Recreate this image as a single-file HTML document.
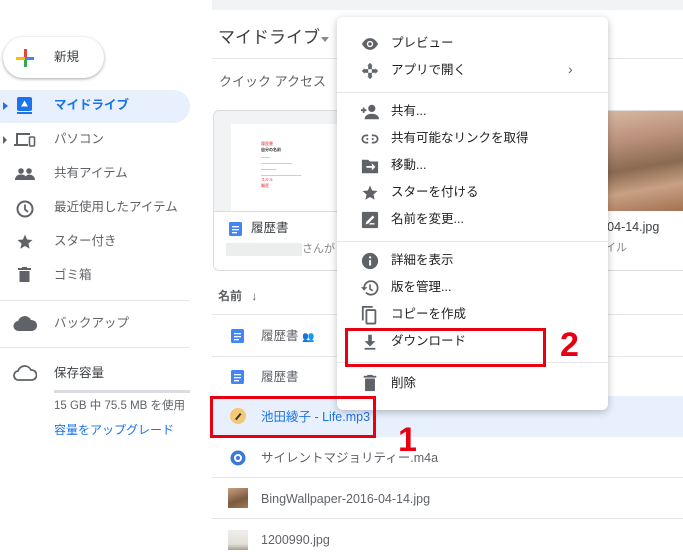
<!DOCTYPE html>
<html><head><meta charset="utf-8">
<style>
*{margin:0;padding:0;box-sizing:border-box}
body{width:683px;height:558px;overflow:hidden;background:#fff;font-family:"Liberation Sans","Noto Sans CJK JP",sans-serif;color:#5f6368;position:relative;font-size:12px;line-height:1.15}
.a{position:absolute;white-space:nowrap}
svg.a{display:block}
.t{font-size:12.5px;color:#3c4043}
.hl{background:#e8f0fe}
.div{position:absolute;height:1px;background:#e6e6e6}
.mi{position:absolute;left:361px;width:18px;height:18px}
.ml{position:absolute;left:391px;font-size:12.5px;color:#202124;line-height:1.15}
.red{position:absolute;border:3px solid #e60012}
.num{position:absolute;color:#e60012;font-weight:bold;font-size:34px;font-family:"Liberation Sans",sans-serif;line-height:1}
</style></head><body>
<div class="a" style="left:212px;top:0;width:471px;height:10px;background:#f1f3f4"></div>
<div class="a" style="left:3px;top:37px;width:101px;height:41px;border-radius:21px;box-shadow:0 1px 3px rgba(0,0,0,.35);background:#fff"></div>
<svg class="a" style="left:15px;top:48px" width="20" height="20" viewBox="0 0 20 20"><rect x="9" y="1" width="3" height="9" fill="#ea4335"/><rect x="9" y="10" width="3" height="9" fill="#34a853"/><rect x="1" y="9" width="9" height="3" fill="#fbbc04"/><rect x="11" y="9" width="8" height="3" fill="#4285f4"/></svg>
<div class="a t" style="left:54px;top:50px">新規</div>
<div class="a hl" style="left:0;top:90px;width:190px;height:33px;border-radius:0 17px 17px 0"></div>
<div class="a" style="left:3px;top:102px;border-left:5px solid #1a73e8;border-top:4px solid transparent;border-bottom:4px solid transparent"></div>
<svg class="a" style="left:17px;top:97px" width="15" height="17"><rect x="0" y="0" width="15" height="14" rx="2" fill="#1a73e8"/><rect x="0" y="15" width="15" height="2" fill="#1a73e8"/><path d="M7.5 3.5l3.5 6H4z" fill="#fff"/></svg>
<div class="a" style="left:54px;top:98px;font-size:12.5px;color:#1a73e8;font-weight:bold">マイドライブ</div>
<div class="a" style="left:3px;top:136px;border-left:4px solid #5f6368;border-top:4px solid transparent;border-bottom:4px solid transparent"></div>
<svg class="a" style="left:14px;top:132px" width="22" height="16"><path d="M2 1h14v2H4v9H2z M0 12h14v2H0z" fill="#5f6368"/><rect x="15.5" y="5" width="5" height="9" rx="1" fill="none" stroke="#5f6368" stroke-width="1.6"/></svg>
<div class="a t" style="left:54px;top:132px;color:#5f6368">パソコン</div>
<svg class="a" style="left:15px;top:168px" width="20" height="12"><circle cx="6" cy="3" r="2.8" fill="#5f6368"/><circle cx="14" cy="3" r="2.8" fill="#5f6368"/><path d="M0 12c0-4 3-5.5 6-5.5s6 1.5 6 5.5z M10 12c0-3 1-5 4-5.5 3 0 6 2 6 5.5z" fill="#5f6368"/></svg>
<div class="a t" style="left:54px;top:166px;color:#5f6368">共有アイテム</div>
<svg class="a" style="left:16px;top:200px" width="18" height="18"><circle cx="9" cy="9" r="7.5" fill="none" stroke="#5f6368" stroke-width="2"/><path d="M9 4.5v5l3 2.5" fill="none" stroke="#5f6368" stroke-width="1.8"/></svg>
<div class="a t" style="left:54px;top:200px;color:#5f6368">最近使用したアイテム</div>
<svg class="a" style="left:16px;top:233px" width="18" height="18" viewBox="0 0 24 24"><path d="M12 17.3l6.2 3.7-1.6-7 5.4-4.7-7.2-.6L12 2 9.2 8.7 2 9.3l5.4 4.7-1.6 7z" fill="#5f6368"/></svg>
<div class="a t" style="left:54px;top:234px;color:#5f6368">スター付き</div>
<svg class="a" style="left:18px;top:267px" width="13" height="15"><rect x="0" y="1" width="13" height="2" fill="#5f6368"/><rect x="4" y="0" width="5" height="2" fill="#5f6368"/><rect x="1.5" y="4" width="10" height="11" fill="#5f6368"/></svg>
<div class="a t" style="left:54px;top:268px;color:#5f6368">ゴミ箱</div>
<div class="div" style="left:0;top:300px;width:190px"></div>
<svg class="a" style="left:13px;top:316px" width="24" height="15"><path d="M6 15a5 5 0 0 1-1-10 7 7 0 0 1 13-1 5 5 0 0 1 1 11z" fill="#5f6368"/></svg>
<div class="a t" style="left:54px;top:316px;color:#5f6368">バックアップ</div>
<div class="div" style="left:0;top:347px;width:190px"></div>
<svg class="a" style="left:13px;top:365px" width="24" height="16"><path d="M6 15a4.5 4.5 0 0 1-1-9 7 7 0 0 1 13-1 4.5 4.5 0 0 1 1 10z" fill="none" stroke="#5f6368" stroke-width="1.8"/></svg>
<div class="a t" style="left:54px;top:366px;color:#3c4043">保存容量</div>
<div class="a" style="left:54px;top:390px;width:136px;height:3px;background:#dadce0"></div>
<div class="a" style="left:54px;top:400px;font-size:11.5px;color:#5f6368">15 GB 中 75.5 MB を使用</div>
<div class="a" style="left:54px;top:424px;font-size:12px;color:#1a73e8">容量をアップグレード</div>
<div class="a" style="left:218px;top:28px;font-size:17px;color:#3c4043">マイドライブ</div>
<div class="a" style="left:321px;top:37px;border-top:5px solid #888;border-left:4px solid transparent;border-right:4px solid transparent"></div>
<div class="div" style="left:212px;top:58px;width:471px"></div>
<div class="a" style="left:219px;top:75px;font-size:13px;color:#5f6368">クイック アクセス</div>
<div class="a" style="left:213px;top:110px;width:140px;height:161px;border:1px solid #dadce0;border-radius:6px;background:#f1f3f4;overflow:hidden">
 <div style="position:absolute;left:17px;top:13px;width:130px;height:88px;background:#fff;font-size:4px;line-height:6px;padding:17px 0 0 30px;color:#333">
  <div style="color:#e33">履歴書</div><div style="font-weight:bold">自分の名前</div><div>____<br>______________<br>_______<br>__________________</div><div style="color:#e33">スキル</div><div style="color:#e33">職歴</div></div>
 <div style="position:absolute;left:0;top:100px;width:140px;height:62px;background:#fff;border-top:1px solid #dadce0"></div>
</div>
<svg class="a" style="left:229px;top:222px" width="13" height="14"><rect width="13" height="14" rx="1.5" fill="#4285f4"/><rect x="3" y="4" width="7" height="1.3" fill="#fff"/><rect x="3" y="7" width="7" height="1.3" fill="#fff"/><rect x="3" y="10" width="5" height="1.3" fill="#fff"/></svg>
<div class="a t" style="left:251px;top:221px">履歴書</div>
<div class="a" style="left:226px;top:243px;width:76px;height:13px;background:#eceded"></div>
<div class="a" style="left:302px;top:243px;font-size:11px;color:#888">さんが</div>
<div class="a" style="left:598px;top:110px;width:90px;height:161px;border:1px solid #dadce0;border-radius:6px;background:#fff;overflow:hidden">
 <div style="position:absolute;left:0;top:0;width:90px;height:100px;background:linear-gradient(170deg,#d9b9a3 0%,#b9907a 30%,#8a6a50 55%,#c9a084 75%,#a07050 100%)"></div>
</div>
<div class="a t" style="left:603px;top:220px">-04-14.jpg</div>
<div class="a" style="left:605px;top:242px;font-size:11px;color:#888">イル</div>
<div class="a" style="left:218px;top:290px;font-size:12px;color:#5f6368;font-weight:bold">名前 <span style="font-weight:normal;margin-left:6px">↓</span></div>
<div class="div" style="left:212px;top:314px;width:471px"></div>
<svg class="a" style="left:231px;top:329px" width="13" height="14"><rect width="13" height="14" rx="1.5" fill="#4285f4"/><rect x="3" y="4" width="7" height="1.3" fill="#fff"/><rect x="3" y="7" width="7" height="1.3" fill="#fff"/><rect x="3" y="10" width="5" height="1.3" fill="#fff"/></svg>
<div class="a t" style="left:261px;top:329px;color:#5f6368">履歴書 <span style="font-size:10px">👥</span></div>
<div class="div" style="left:212px;top:356px;width:471px"></div>
<svg class="a" style="left:231px;top:370px" width="13" height="14"><rect width="13" height="14" rx="1.5" fill="#4285f4"/><rect x="3" y="4" width="7" height="1.3" fill="#fff"/><rect x="3" y="7" width="7" height="1.3" fill="#fff"/><rect x="3" y="10" width="5" height="1.3" fill="#fff"/></svg>
<div class="a t" style="left:261px;top:370px;color:#5f6368">履歴書</div>
<div class="a hl" style="left:212px;top:396px;width:471px;height:41px"></div>
<svg class="a" style="left:230px;top:408px" width="16" height="16"><circle cx="8" cy="8" r="8" fill="#f4c874"/><path d="M5 11l5-6 1.5 1.3-5 6z" fill="#333"/></svg>
<div class="a" style="left:261px;top:410px;font-size:12.5px;color:#1a73e8">池田綾子 - Life.mp3</div>
<svg class="a" style="left:230px;top:450px" width="16" height="16"><circle cx="8" cy="8" r="7.5" fill="#3b78d8"/><circle cx="8" cy="8" r="4" fill="#fff"/><circle cx="8" cy="8" r="2" fill="#3b78d8"/></svg>
<div class="a t" style="left:261px;top:451px;color:#5f6368">サイレントマジョリティー.m4a</div>
<div class="div" style="left:212px;top:477px;width:471px"></div>
<div class="a" style="left:228px;top:488px;width:20px;height:20px;background:linear-gradient(160deg,#c9a084,#7a5a40 60%,#a07a50)"></div>
<div class="a t" style="left:261px;top:492px;color:#5f6368">BingWallpaper-2016-04-14.jpg</div>
<div class="div" style="left:212px;top:518px;width:471px"></div>
<div class="a" style="left:228px;top:530px;width:20px;height:20px;background:linear-gradient(#eee,#e4e0d8 70%,#a99f90)"></div>
<div class="a t" style="left:261px;top:533px;color:#5f6368">1200990.jpg</div>
<div class="a" style="left:337px;top:17px;width:271px;height:393px;background:#fff;border-radius:6px;box-shadow:0 2px 8px rgba(0,0,0,.25)"></div>
<svg class="mi" style="top:35px" viewBox="0 0 20 20"><path d="M1 10c3-5 6-6.5 9-6.5s6 1.5 9 6.5c-3 5-6 6.5-9 6.5S4 15 1 10z" fill="#5f6368"/><circle cx="10" cy="10" r="3.5" fill="#fff"/><circle cx="10" cy="10" r="2" fill="#5f6368"/></svg>
<div class="ml" style="top:36px">プレビュー</div>
<svg class="mi" style="top:62px" viewBox="0 0 20 20"><path d="M10 1l3 3h-6z M10 19l3-3h-6z M1 10l3-3v6z M19 10l-3-3v6z" fill="#5f6368"/><rect x="8" y="4" width="4" height="4" fill="#5f6368"/><rect x="8" y="12" width="4" height="4" fill="#5f6368"/><rect x="4" y="8" width="4" height="4" fill="#5f6368"/><rect x="12" y="8" width="4" height="4" fill="#5f6368"/></svg>
<div class="ml" style="top:63px">アプリで開く</div>
<div class="a" style="left:568px;top:62px;font-size:14px;color:#5f6368;line-height:1">›</div>
<div class="div" style="left:337px;top:92px;width:271px"></div>
<svg class="mi" style="top:103px" viewBox="0 0 20 20"><circle cx="12" cy="6" r="4" fill="#5f6368"/><path d="M4 18c0-4 4-6 8-6s8 2 8 6z" fill="#5f6368"/><path d="M0 8h6M3 5v6" stroke="#5f6368" stroke-width="2"/></svg>
<div class="ml" style="top:104px">共有...</div>
<svg class="mi" style="top:130px" viewBox="0 0 20 20"><rect x="1.5" y="6" width="17" height="8" rx="4" fill="none" stroke="#5f6368" stroke-width="2"/><rect x="6" y="9" width="8" height="2" fill="#5f6368"/><rect x="8" y="5" width="4" height="10" fill="#fff"/></svg>
<div class="ml" style="top:131px">共有可能なリンクを取得</div>
<svg class="mi" style="top:157px" viewBox="0 0 20 20"><path d="M1 3h7l2 2h9v13H1z" fill="#5f6368"/><path d="M6 10h6V7l4 4-4 4v-3H6z" fill="#fff"/></svg>
<div class="ml" style="top:158px">移動...</div>
<svg class="mi" style="top:184px" viewBox="0 0 24 24"><path d="M12 17.3l6.2 3.7-1.6-7 5.4-4.7-7.2-.6L12 2 9.2 8.7 2 9.3l5.4 4.7-1.6 7z" fill="#5f6368"/></svg>
<div class="ml" style="top:185px">スターを付ける</div>
<svg class="mi" style="top:211px" viewBox="0 0 20 20"><rect x="1" y="1" width="18" height="18" rx="1.5" fill="#5f6368"/><path d="M5 15l1-3 7-7 2 2-7 7z M9 15h6v-1.5H10z" fill="#fff"/></svg>
<div class="ml" style="top:212px">名前を変更...</div>
<div class="div" style="left:337px;top:241px;width:271px"></div>
<svg class="mi" style="top:252px" viewBox="0 0 20 20"><circle cx="10" cy="10" r="9" fill="#5f6368"/><rect x="9" y="9" width="2.2" height="6" fill="#fff"/><circle cx="10.1" cy="6" r="1.3" fill="#fff"/></svg>
<div class="ml" style="top:253px">詳細を表示</div>
<svg class="mi" style="top:279px" viewBox="0 0 20 20"><path d="M3.5 10a7.5 7.5 0 1 1 2 5" fill="none" stroke="#5f6368" stroke-width="2"/><path d="M0 9h7l-3.5 4z" fill="#5f6368"/><path d="M10 6v5l3 2" fill="none" stroke="#5f6368" stroke-width="1.8"/></svg>
<div class="ml" style="top:280px">版を管理...</div>
<svg class="mi" style="top:305px;height:20px" viewBox="0 0 20 22"><path d="M2 17V2h11" fill="none" stroke="#5f6368" stroke-width="2"/><rect x="6" y="5.5" width="10" height="15" rx="1" fill="none" stroke="#5f6368" stroke-width="2"/></svg>
<div class="ml" style="top:307px">コピーを作成</div>
<svg class="mi" style="top:333px" viewBox="0 0 20 20"><path d="M8 2h4v7h4l-6 6-6-6h4z" fill="#5f6368"/><rect x="4" y="16.5" width="12" height="2" fill="#5f6368"/></svg>
<div class="ml" style="top:334px">ダウンロード</div>
<div class="div" style="left:337px;top:362px;width:271px"></div>
<svg class="mi" style="top:374px" viewBox="0 0 20 20"><rect x="3" y="2" width="14" height="2" fill="#5f6368"/><rect x="7" y="1" width="6" height="2" fill="#5f6368"/><rect x="4.5" y="5" width="11" height="14" fill="#5f6368"/></svg>
<div class="ml" style="top:376px">削除</div>
<div class="red" style="left:345px;top:328px;width:201px;height:39px"></div>
<div class="red" style="left:210px;top:396px;width:166px;height:42px"></div>
<div class="num" style="left:398px;top:423px">1</div>
<div class="num" style="left:560px;top:328px">2</div>
</body></html>
